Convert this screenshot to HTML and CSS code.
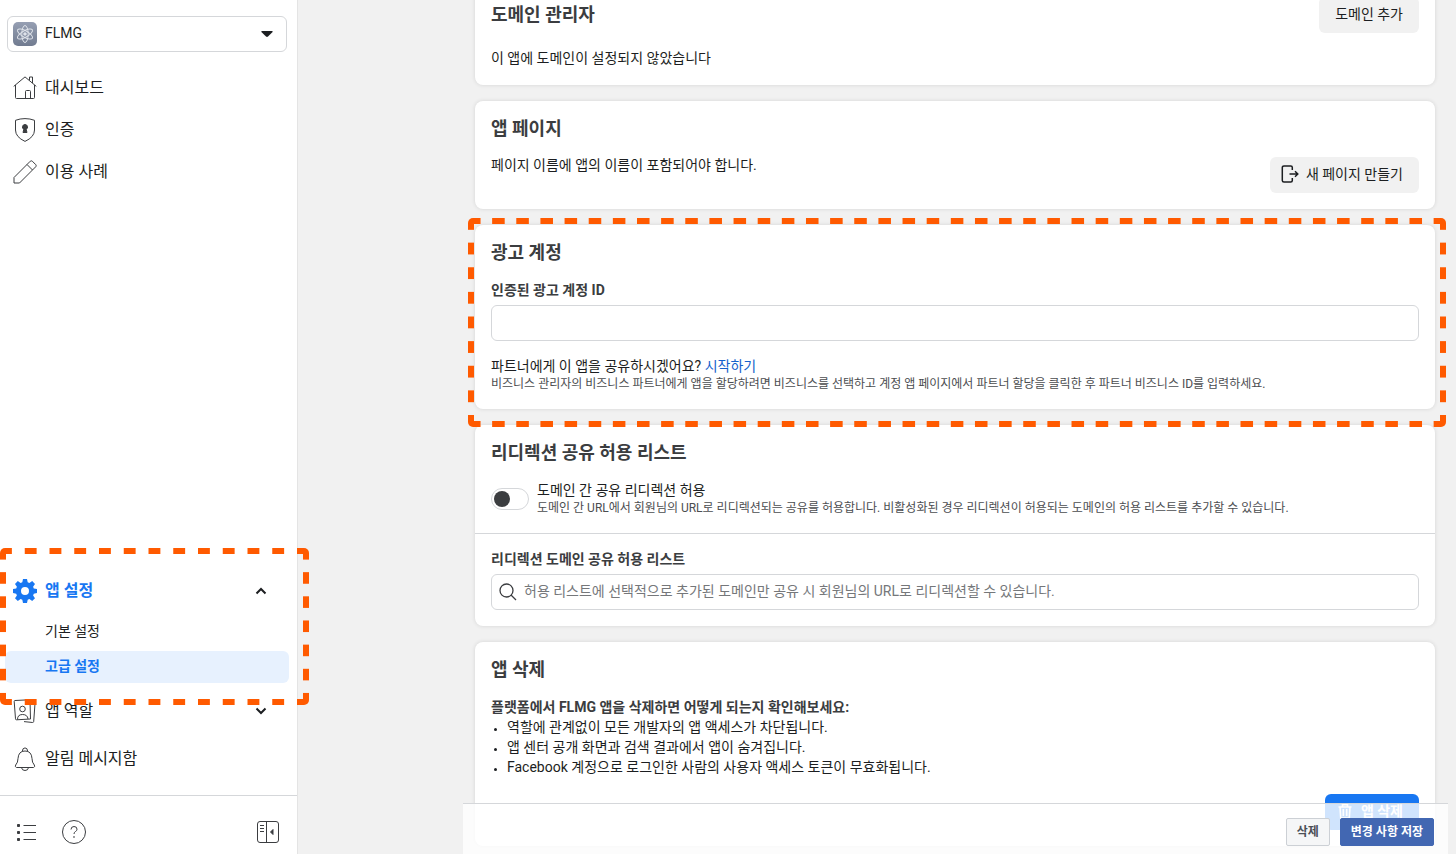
FILE: index.html
```html
<!DOCTYPE html>
<html lang="ko">
<head>
<meta charset="utf-8">
<title>FLMG - 고급 설정</title>
<link rel="stylesheet" href="styles.css">
</head>
<body>
<div class="sidebar">
  <div class="app-picker">
    <svg class="app-logo" width="24" height="24" viewBox="0 0 24 24" fill="none" aria-hidden="true">
      <defs><linearGradient id="logo-bg" x1="0" y1="0" x2="0" y2="1"><stop offset="0" stop-color="#969fb3"/><stop offset="1" stop-color="#717b90"/></linearGradient></defs>
      <rect width="24" height="24" rx="5" fill="url(#logo-bg)"/>
      <g stroke="#dfe3ea" stroke-width="1">
        <ellipse cx="12" cy="12" rx="3.2" ry="8.5"/>
        <ellipse cx="12" cy="12" rx="3.2" ry="8.5" transform="rotate(60 12 12)"/>
        <ellipse cx="12" cy="12" rx="3.2" ry="8.5" transform="rotate(120 12 12)"/>
      </g>
      <circle cx="12" cy="12" r="1.8" fill="#dfe3ea"/>
    </svg>
    <select class="app-select" aria-label="앱 선택"><option>FLMG</option></select>
    <svg class="app-caret" width="12" height="7" viewBox="0 0 12 7" aria-hidden="true"><path d="M1 0h10q1 0 .6 1L7 5.600q-1 .8-2 0L.4 1Q0 0 1 0z" fill="#1c1e21"/></svg>
  </div>

  <nav class="nav">
    <a class="nav-item" href="#">
      <svg class="icon" viewBox="0 0 24 24"><path d="M.7 10.400 12 .9l11.300 9.500M2.500 9v12.500q0 1 1 1h17q1 0 1-1V9M12.500 22.500v-7q0-1 1-1h3q1 0 1 1v7M16.500 4.300V1h3v6"/></svg>
      <span>대시보드</span>
    </a>
    <a class="nav-item" href="#">
      <svg class="icon" viewBox="0 0 24 24"><path d="M12 .6q5 0 9.500 1.700V12q0 7-9.500 11.400Q2.500 19 2.500 12V2.300Q7 .6 12 .6z"/><path d="M12 6.500a2.600 2.600 0 0 1 1.200 4.900l.8 3.100h-4l.8-3.100A2.600 2.600 0 0 1 12 6.500z" fill="#3b3d40"/></svg>
      <span>인증</span>
    </a>
    <a class="nav-item" href="#">
      <svg class="icon" viewBox="0 0 24 24"><path d="M1 23v-5.500L17.300 1.200q1-.8 2 0l3.500 3.500q.8 1 0 2L6.500 23zM14 4.500l5.500 5.500"/></svg>
      <span>이용 사례</span>
    </a>
  </nav>

  <nav class="nav nav-bottom">
    <div class="nav-group">
      <a class="nav-item current" href="#">
        <svg class="icon gear" viewBox="0 0 24 24"><path fill-rule="evenodd" d="M10 0h4l.7 3.300 1.700.7 2.800-1.900 2.800 2.800L20.100 7.700l.7 1.700L24 10v4l-3.200.7-.7 1.700 1.900 2.800-2.800 2.800-2.800-1.900-1.700.7L14 24h-4l-.7-3.200-1.700-.7L4.800 22 2 19.200l1.900-2.800-.7-1.700L0 14v-4l3.200-.6.7-1.700L2 4.900l2.800-2.800L7.600 4l1.700-.7zM12 8a4 4 0 1 0 0 8 4 4 0 0 0 0-8z"/></svg>
        <span>앱 설정</span>
        <svg class="chevron" viewBox="0 0 12 8"><path d="M1.500 6.500 6 2l4.500 4.500"/></svg>
      </a>
      <a class="sub-item" href="#">기본 설정</a>
      <a class="sub-item selected" href="#" aria-current="page">고급 설정</a>
      <div class="highlight"></div>
    </div>
    <a class="nav-item" href="#">
      <svg class="icon" viewBox="0 0 24 24"><path d="M2 1.500 16 .8q1 0 1 1L17.500 20 3.500 20.800q-1 0-1-1L1.200 2.500q0-1 .8-1zM18.500 3l2.500.3q1 .2 1 1.200L20.700 22.500q-.2 1-1 1L11 22.600M4.500 20.500q0-5 5-5t5.500 4.500"/><circle cx="9.500" cy="10" r="2.800"/></svg>
      <span>앱 역할</span>
      <svg class="chevron" viewBox="0 0 12 8"><path d="M1.500 1.500 6 6l4.500-4.500"/></svg>
    </a>
    <a class="nav-item" href="#">
      <svg class="icon" viewBox="0 0 24 24"><path d="M3.500 20.500q-2-.8-.8-2.500Q5 15.500 5 11.500 5.500 4 12 4t7 7.500q0 4 2.300 6.500 1.200 1.700-.8 2.500zM9.300 4.300Q9.500.9 12 .9t2.700 3.400M8.500 20.700q.5 2.800 3.500 2.800t3.500-2.800"/></svg>
      <span>알림 메시지함</span>
    </a>
  </nav>

  <div class="sidebar-footer">
    <button class="icon-button" aria-label="메뉴"><svg class="icon" viewBox="0 0 24 24"><path d="M9.500 5.500H22M9.500 12.500H22M9.500 19.500H22"/><path d="M3.500 4.500h2v2h-2zM3.500 11.500h2v2h-2zM3.500 18.500h2v2h-2z" fill="#3b3d40"/></svg></button>
    <button class="icon-button" aria-label="도움말"><svg class="icon" viewBox="0 0 24 24"><circle cx="12" cy="12" r="11.500"/><path d="M9 9.500Q9 6.500 12 6.500t3 2.700q0 1.500-1.500 2.300T12 14"/><circle cx="12" cy="17" r=".4"/></svg></button>
    <button class="icon-button collapse" aria-label="메뉴 접기"><svg class="icon" viewBox="0 0 24 24"><rect x="1.500" y="1.500" width="21" height="21" rx="2.500"/><path d="M10.500 1.500v21M4 5.500h4M4 8.500h4M4 11.500h4"/><path d="M17 9.500v5L14.500 12z" fill="#3b3d40"/></svg></button>
  </div>
</div>

<main class="main">
  <section class="card">
    <div class="card-head">
      <h2>도메인 관리자</h2>
      <button class="button">도메인 추가</button>
    </div>
    <p class="empty">이 앱에 도메인이 설정되지 않았습니다</p>
  </section>

  <section class="card">
    <h2>앱 페이지</h2>
    <div class="page-row">
      <p>페이지 이름에 앱의 이름이 포함되어야 합니다.</p>
      <button class="button">
        <svg width="18" height="18" viewBox="0 0 18 18" fill="none" stroke="#1c1e21" stroke-width="1.500" aria-hidden="true"><path d="M11.300 5V2.500q0-1.500-1.500-1.500H3Q1.300 1 1.300 2.500v13Q1.300 17 3 17h6.800q1.500 0 1.500-1.500V13M8.500 9h8M14 6.200 16.800 9 14 11.800"/></svg>
        새 페이지 만들기
      </button>
    </div>
  </section>

  <section class="card">
    <h2>광고 계정</h2>
    <label class="label" for="ad-account">인증된 광고 계정 ID</label>
    <input class="field" id="ad-account" type="text">
    <p class="share">파트너에게 이 앱을 공유하시겠어요? <a href="#">시작하기</a></p>
    <p class="note">비즈니스 관리자의 비즈니스 파트너에게 앱을 할당하려면 비즈니스를 선택하고 계정 앱 페이지에서 파트너 할당을 클릭한 후 파트너 비즈니스 ID를 입력하세요.</p>
    <div class="highlight"></div>
  </section>

  <section class="card">
    <h2>리디렉션 공유 허용 리스트</h2>
    <div class="toggle-row">
      <input class="toggle" id="redirect" type="checkbox" role="switch">
      <div>
        <label for="redirect">도메인 간 공유 리디렉션 허용</label>
        <p class="note">도메인 간 URL에서 회원님의 URL로 리디렉션되는 공유를 허용합니다. 비활성화된 경우 리디렉션이 허용되는 도메인의 허용 리스트를 추가할 수 있습니다.</p>
      </div>
    </div>
    <label class="label" for="domains">리디렉션 도메인 공유 허용 리스트</label>
    <div class="search">
      <svg width="18" height="18" viewBox="0 0 18 18" fill="none" stroke="#3b3d40" stroke-width="1.300" aria-hidden="true"><circle cx="7.500" cy="7.500" r="6.500"/><path d="m12 12 5 5"/></svg>
      <input class="field" id="domains" type="text" placeholder="허용 리스트에 선택적으로 추가된 도메인만 공유 시 회원님의 URL로 리디렉션할 수 있습니다.">
    </div>
  </section>

  <section class="card">
    <h2>앱 삭제</h2>
    <p class="label">플랫폼에서 FLMG 앱을 삭제하면 어떻게 되는지 확인해보세요:</p>
    <ul class="effects">
      <li>역할에 관계없이 모든 개발자의 앱 액세스가 차단됩니다.</li>
      <li>앱 센터 공개 화면과 검색 결과에서 앱이 숨겨집니다.</li>
      <li>Facebook 계정으로 로그인한 사람의 사용자 액세스 토큰이 무효화됩니다.</li>
    </ul>
    <button class="button primary">
      <svg width="16" height="16" viewBox="0 0 16 16" fill="none" stroke="#fff" stroke-width="1.600" aria-hidden="true"><path d="M1.500 4h13M5.500 3.500V1.800h5v1.700M3 4l.7 11h8.600L13 4M6.300 6v7M9.700 6v7"/></svg>
      앱 삭제
    </button>
  </section>

  <div class="save-bar">
    <button class="small-button">삭제</button>
    <button class="small-button save">변경 사항 저장</button>
  </div>
</main>
</body>
</html>
```
FILE: styles.css
```css
* {
  box-sizing: border-box;
}
body {
  display: flex;
  height: 100vh;
  margin: 0;
  overflow: hidden;
  background: #f1f1f1;
  color: #1c1e21;
  font: 14px/20px Roboto, "Noto Sans CJK KR", sans-serif;
}
h2, p, ul {
  margin: 0;
}
a {
  color: #1461cc;
  text-decoration: none;
}
button, input, select {
  font: inherit;
  color: inherit;
}

/* sidebar */
.sidebar {
  position: relative;
  z-index: 2;
  display: flex;
  flex-direction: column;
  flex: none;
  width: 298px;
  background: #fff;
  border-right: 1px solid #e4e4e4;
}
.app-picker {
  position: relative;
  margin: 16px 10px 15px 7px;
}
.app-select {
  display: block;
  width: 100%;
  height: 36px;
  padding: 0 40px 2px 37px;
  appearance: none;
  background: #fff;
  border: 1px solid #d5d7da;
  border-radius: 6px;
}
.app-logo, .app-caret {
  position: absolute;
  pointer-events: none;
}
.app-logo {
  left: 6px;
  top: 6px;
}
.app-caret {
  right: 14px;
  top: 15px;
}
.nav-item {
  display: flex;
  align-items: center;
  gap: 8px;
  height: 42px;
  padding: 0 30px 0 13px;
  color: #1c1e21;
  font-size: 16px;
}
.icon {
  flex: none;
  width: 24px;
  height: 24px;
  fill: none;
  stroke: #3b3d40;
  stroke-width: 1;
}
.nav-bottom {
  display: flex;
  flex-direction: column;
  gap: 6px;
  margin-top: auto;
  padding-bottom: 15px;
}
.nav-group {
  position: relative;
  margin-bottom: 1px;
}
.current {
  margin-bottom: 4px;
  color: #1877f2;
  font-weight: bold;
}
.gear {
  fill: #1877f2;
  stroke: none;
}
.chevron {
  width: 12px;
  height: 8px;
  margin-left: auto;
  fill: none;
  stroke: #1c1e21;
  stroke-width: 2;
}
.sub-item {
  display: block;
  margin: 0 8px 0 5px;
  padding: 5px 0 7px 40px;
  border-radius: 6px;
  color: #1c1e21;
}
.sub-item + .sub-item {
  margin-top: 3px;
}
.selected {
  background: #e7f1fe;
  color: #1877f2;
  font-weight: bold;
}
.sidebar-footer {
  display: flex;
  gap: 24px;
  height: 59px;
  padding: 14px 17px 0 14px;
  align-items: center;
  border-top: 1px solid #d5d7da;
}
.icon-button {
  display: flex;
  padding: 0;
  border: 0;
  background: none;
}
.collapse {
  margin-left: auto;
}

/* orange dashed frame, 12px dashes with 12px gaps.
   the padding keeps a whole dash at the far ends */
.highlight {
  --across: linear-gradient(90deg, #ff5a00 50%, transparent 50%);
  --down: linear-gradient(#ff5a00 50%, transparent 50%);
  position: absolute;
  z-index: 1;
  padding: 0 12px 12px 0;
  background-image: var(--across), var(--across), var(--down), var(--down);
  background-position: 0 0, 0 calc(100% + 12px), 0 0, calc(100% + 12px) 0;
  background-size: 24px 6px, 24px 6px, 6px 24px, 6px 24px;
  background-repeat: round no-repeat, round no-repeat, no-repeat round, no-repeat round;
  background-origin: content-box;
  border-radius: 5px;
  pointer-events: none;
}
.nav-group .highlight {
  inset: -22px -12px -22px 0;
}
.card .highlight {
  inset: -7px -11px -18px -7px;
}

/* content */
.main {
  position: relative;
  flex: 1;
  display: flex;
  flex-direction: column;
  gap: 16px;
  min-width: 0;
  margin: 0 8px 0 165px;
  padding: 0 13px 0 12px;
}
.card {
  position: relative;
  flex: none;
  padding: 16px;
  background: #fff;
  border-radius: 8px;
  box-shadow: 0 0 4px rgba(0, 0, 0, .12);
}
.card:first-child {
  margin-top: -19px;
}
h2 {
  color: #3b3d40;
  font-size: 18px;
  line-height: 24px;
}
.card-head {
  display: flex;
  align-items: center;
  justify-content: space-between;
}
.empty {
  padding: 15px 0 1px;
}
.page-row {
  display: flex;
  align-items: flex-start;
  justify-content: space-between;
  margin-top: 14px;
}
.button {
  display: flex;
  align-items: center;
  gap: 7px;
  height: 36px;
  padding: 0 16px 2px;
  background: #f1f1f1;
  border: 0;
  border-radius: 6px;
}
.page-row .button {
  margin-top: 2px;
  padding-left: 11px;
}
.label {
  display: block;
  margin-top: 15px;
  color: #3b3d40;
  font-weight: bold;
}
.field {
  display: block;
  width: 100%;
  height: 36px;
  padding: 0 12px 2px;
  background: #fff;
  border: 1px solid #d5d7da;
  border-radius: 6px;
}
.label + .field, .label + .search {
  margin-top: 5px;
}
.share {
  margin-top: 15px;
}
.note {
  color: #4b4d50;
  font-size: 12px;
  line-height: 17px;
}
.toggle-row {
  display: flex;
  align-items: center;
  gap: 8px;
  margin: 15px -16px 0;
  padding: 0 16px 16px;
  border-bottom: 1px solid #d5d7da;
}
.toggle-row label {
  display: block;
}
.toggle {
  flex: none;
  width: 38px;
  height: 22px;
  margin: 0;
  padding: 2px;
  appearance: none;
  border: 1px solid #d5d7da;
  border-radius: 11px;
}
.toggle::before {
  content: "";
  display: block;
  width: 16px;
  height: 16px;
  border-radius: 50%;
  background: #3b3d40;
}
.search {
  position: relative;
}
.search svg {
  position: absolute;
  left: 8px;
  top: 9px;
}
.search .field {
  padding-left: 32px;
}
.field::placeholder {
  color: #75777a;
}
.effects {
  padding-left: 16px;
}
.effects li::marker {
  font-size: 11px;
}
.primary {
  gap: 8px;
  margin: 17px 0 0 auto;
  padding: 0 16px 2px 12px;
  background: #1877f2;
  color: #fff;
  font-weight: bold;
}

/* bottom bar */
.save-bar {
  position: absolute;
  left: 0;
  right: 0;
  bottom: 0;
  display: flex;
  justify-content: flex-end;
  gap: 10px;
  padding: 14px 14px 8px;
  background: rgba(255, 255, 255, .8);
  border-top: 1px solid #d5d7da;
}
.small-button {
  height: 28px;
  padding: 0 10px;
  background: #f5f6f7;
  border: 1px solid #ccd0d5;
  border-radius: 2px;
  color: #4b4f56;
  font-size: 12px;
  font-weight: bold;
}
.save {
  background: #4267b2;
  border-color: #4267b2;
  color: #fff;
}
```
